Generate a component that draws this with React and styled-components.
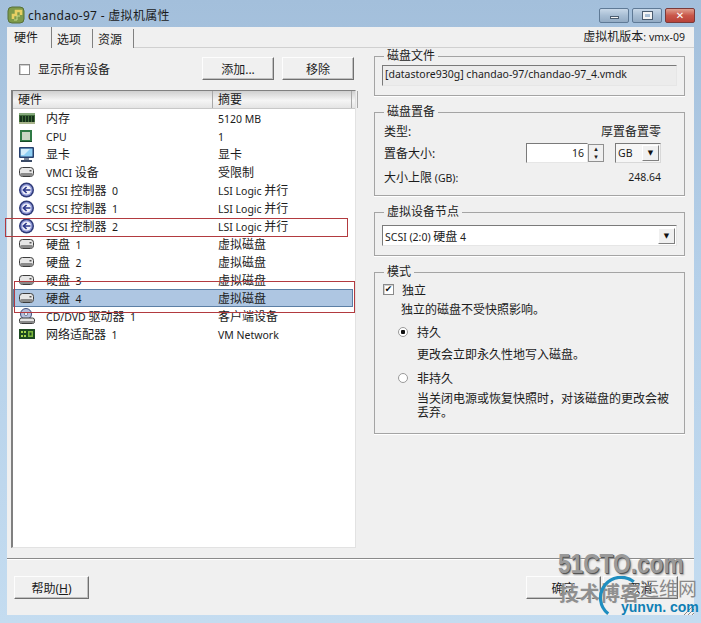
import styled, { createGlobalStyle } from 'styled-components'

const GlobalStyle = createGlobalStyle`
    html, body {
        margin: 0;
        padding: 0;
        background: #b9d3ea;
    }
    * {
        box-sizing: border-box;
    }
`

const RamIcon = () => (
    <svg width='17' height='13' viewBox='0 0 17 13'>
        <rect x='0' y='1' width='16' height='10' fill='#3f6b3a' />
        <rect x='0' y='1' width='16' height='2' fill='#86a97c' />
        <path d='M2 4v6M5 4v6M8 4v6M11 4v6M14 4v6' stroke='#16321a' strokeWidth='2' />
        <rect x='0' y='10' width='16' height='2' fill='#a9b48c' />
    </svg>
)

const CpuIcon = () => (
    <svg width='16' height='16' viewBox='0 0 16 16'>
        <rect x='1' y='2' width='12' height='12' fill='#2f7a45' />
        <rect x='3' y='4' width='8' height='8' fill='#c9d6c4' />
        <rect x='1' y='13' width='12' height='1' fill='#164a28' />
    </svg>
)

const MonitorIcon = () => (
    <svg width='17' height='17' viewBox='0 0 17 17'>
        <rect x='0' y='1' width='15' height='11' rx='1' fill='#27406e' />
        <rect x='1.5' y='2.5' width='12' height='8' fill='#8fd0f4' />
        <path d='M2 3h9l-6 6H2z' fill='#d4eefb' />
        <rect x='5' y='12' width='5' height='2' fill='#7a8799' />
        <rect x='2' y='14' width='11' height='2' fill='#3a4a66' />
    </svg>
)

const DiskIcon = () => (
    <svg width='16' height='12' viewBox='0 0 16 12'>
        <rect x='0.5' y='1.5' width='14' height='9' rx='3' fill='#e6e6e6' stroke='#3c3c3c' />
        <rect x='1' y='7' width='13' height='3' rx='1.5' fill='#8a8a8a' />
        <rect x='10.5' y='4' width='2' height='1.5' fill='#555' />
    </svg>
)

const ScsiIcon = () => (
    <svg width='16' height='16' viewBox='0 0 16 16'>
        <circle cx='7.5' cy='8' r='7.5' fill='#2e3a78' />
        <circle cx='7.5' cy='8' r='6' fill='#8f98d6' />
        <circle cx='7.5' cy='8' r='4.6' fill='#f2f3fb' />
        <path d='M11.5 8H5M7.6 5L4.4 8l3.2 3' fill='none' stroke='#2e3a8c' strokeWidth='1.7' />
    </svg>
)

const CdIcon = () => (
    <svg width='17' height='17' viewBox='0 0 17 17'>
        <circle cx='7' cy='6' r='5.5' fill='#b6bfdc' stroke='#3f4c78' />
        <circle cx='7' cy='6' r='1.6' fill='#fff' stroke='#52617a' strokeWidth='0.7' />
        <rect x='0.5' y='10' width='15' height='5.5' rx='2' fill='#e4e4e4' stroke='#3c3c3c' />
        <rect x='1' y='13' width='14' height='2' fill='#8a8a8a' />
    </svg>
)

const NicIcon = () => (
    <svg width='17' height='12' viewBox='0 0 17 12'>
        <rect x='0' y='1' width='16' height='10' fill='#1d4a22' />
        <path d='M2 3h2v2H2zM5 3h2v2H5zM2 7h2v2H2zM5 7h2v2H5z' fill='#a6d64e' />
        <rect x='9' y='3' width='5' height='6' fill='#7cb83c' />
        <rect x='10.5' y='4.5' width='2' height='3' fill='#1d4a22' />
    </svg>
)

const AppIcon = () => (
    <svg width='18' height='18' viewBox='0 0 18 18'>
        <rect x='1' y='1' width='16' height='16' rx='4' fill='#7f9a4a' stroke='#56703a' />
        <path d='M6 13V9h3V5h5v4' fill='none' stroke='#e8cf63' strokeWidth='2.6' />
        <path d='M7 14h3v-4h3' fill='none' stroke='#c7d98a' strokeWidth='1' />
    </svg>
)

// Han glyphs sit a little larger than the latin text, as in the Windows UI font
const Mixed = ({ children }) =>
    children
        .split(/([\u3000-\u303f\u4e00-\u9fff\uff00-\uffef]+)/)
        .map((part, i) => (i % 2 ? <Han key={i}>{part}</Han> : part))

const devices = [
    { icon: <RamIcon />, name: '内存', summary: '5120 MB' },
    { icon: <CpuIcon />, name: 'CPU', summary: '1' },
    { icon: <MonitorIcon />, name: '显卡', summary: '显卡' },
    { icon: <DiskIcon />, name: 'VMCI 设备', summary: '受限制' },
    { icon: <ScsiIcon />, name: 'SCSI 控制器  0', summary: 'LSI Logic 并行' },
    { icon: <ScsiIcon />, name: 'SCSI 控制器  1', summary: 'LSI Logic 并行' },
    { icon: <ScsiIcon />, name: 'SCSI 控制器  2', summary: 'LSI Logic 并行' },
    { icon: <DiskIcon />, name: '硬盘  1', summary: '虚拟磁盘' },
    { icon: <DiskIcon />, name: '硬盘  2', summary: '虚拟磁盘' },
    { icon: <DiskIcon />, name: '硬盘  3', summary: '虚拟磁盘' },
    { icon: <DiskIcon />, name: '硬盘  4', summary: '虚拟磁盘', selected: true },
    { icon: <CdIcon />, name: 'CD/DVD 驱动器  1', summary: '客户端设备' },
    { icon: <NicIcon />, name: '网络适配器  1', summary: 'VM Network' },
]

const App = () => (
    <Window>
        <GlobalStyle />
        <TitleBar>
            <TitleLeft>
                <AppIcon />
                <TitleText>chandao-97 - 虚拟机属性</TitleText>
            </TitleLeft>
            <WindowButtons>
                <WindowButton>
                    <MinGlyph />
                </WindowButton>
                <WindowButton>
                    <MaxGlyph />
                </WindowButton>
                <WindowButton $close>
                    <CloseGlyph>✕</CloseGlyph>
                </WindowButton>
            </WindowButtons>
        </TitleBar>
        <Client>
            <TabRow>
                <Tabs>
                    <Tab $active>硬件</Tab>
                    <Tab>选项</Tab>
                    <Tab>资源</Tab>
                </Tabs>
                <VersionText>
                    <Mixed>虚拟机版本: vmx-09</Mixed>
                </VersionText>
            </TabRow>
            <Body>
                <LeftColumn>
                    <Toolbar>
                        <CheckLabel>
                            <CheckBox />
                            显示所有设备
                        </CheckLabel>
                        <ToolButtons>
                            <Button>添加...</Button>
                            <Button>移除</Button>
                        </ToolButtons>
                    </Toolbar>
                    <DeviceTable>
                        <HeaderRow>
                            <HeaderCell>硬件</HeaderCell>
                            <HeaderCell>摘要</HeaderCell>
                            <HeaderCell />
                        </HeaderRow>
                        {devices.map(device => (
                            <Row key={device.name} $selected={device.selected}>
                                <IconCell>{device.icon}</IconCell>
                                <span>
                                    <Mixed>{device.name}</Mixed>
                                </span>
                                <span>
                                    <Mixed>{device.summary}</Mixed>
                                </span>
                            </Row>
                        ))}
                    </DeviceTable>
                </LeftColumn>
                <RightColumn>
                    <Group>
                        <GroupTitle>磁盘文件</GroupTitle>
                        <ReadOnlyField>[datastore930g] chandao-97/chandao-97_4.vmdk</ReadOnlyField>
                    </Group>
                    <Group>
                        <GroupTitle>磁盘置备</GroupTitle>
                        <FormRow>
                            <Han>类型:</Han>
                            <Han>厚置备置零</Han>
                        </FormRow>
                        <SizeRow>
                            <Han>置备大小:</Han>
                            <SizeControls>
                                <SpinInput>16</SpinInput>
                                <Spinner>
                                    <SpinPart>▴</SpinPart>
                                    <SpinPart>▾</SpinPart>
                                </Spinner>
                                <UnitSelect>
                                    GB
                                    <ArrowButton>▼</ArrowButton>
                                </UnitSelect>
                            </SizeControls>
                        </SizeRow>
                        <FormRow>
                            <span>
                                <Mixed>大小上限 (GB):</Mixed>
                            </span>
                            <span>248.64</span>
                        </FormRow>
                    </Group>
                    <Group>
                        <GroupTitle>虚拟设备节点</GroupTitle>
                        <NodeSelect>
                            <span>
                                <Mixed>SCSI (2:0) 硬盘 4</Mixed>
                            </span>
                            <ArrowButton>▼</ArrowButton>
                        </NodeSelect>
                    </Group>
                    <ModeGroup>
                        <GroupTitle>模式</GroupTitle>
                        <IndependentRow>
                            <CheckBox $checked>✔</CheckBox>
                            独立
                        </IndependentRow>
                        <ModeNote>独立的磁盘不受快照影响。</ModeNote>
                        <RadioRow>
                            <Radio $checked />
                            持久
                        </RadioRow>
                        <RadioNote $top={7}>更改会立即永久性地写入磁盘。</RadioNote>
                        <RadioRow>
                            <Radio />
                            非持久
                        </RadioRow>
                        <RadioNote $top={5}>当关闭电源或恢复快照时，对该磁盘的更改会被丢弃。</RadioNote>
                    </ModeGroup>
                </RightColumn>
            </Body>
            <Footer>
                <Button $wide>
                    帮助(<u>H</u>)
                </Button>
                <FooterRight>
                    <Button $wide>确定</Button>
                    <Button $wide>取消</Button>
                </FooterRight>
            </Footer>
        </Client>
        <Highlight $left={5} $top={218} $width={343} $height={19} />
        <Highlight $left={14} $top={281} $width={341} $height={32} />
        <ResizeGrip viewBox='0 0 10 10'>
            <path d='M0 10L10 0M4 10l6-6M8 10l2-2' stroke='#8c8c8c' strokeWidth='1' />
        </ResizeGrip>
        <Watermark>
            <WatermarkBrand>51CTO.com</WatermarkBrand>
            <WatermarkBlog>技术博客</WatermarkBlog>
            <WatermarkSite>运维网</WatermarkSite>
            <WatermarkArc viewBox='0 0 50 50'>
                <path d='M46 6A24 24 0 0 0 14 46' fill='none' stroke='#1f8ec0' strokeWidth='4' />
            </WatermarkArc>
            <WatermarkDomain>yunvn. com</WatermarkDomain>
        </Watermark>
    </Window>
)

const Window = styled.div`
    position: relative;
    width: 701px;
    height: 623px;
    overflow: hidden;
    display: flex;
    flex-direction: column;
    padding: 0 7px 8px;
    background: linear-gradient(180deg, #a3bfdb 0%, #b5d0e9 45%, #c4dcf0 100%);
    color: #1c1c1c;
    font-family: 'Noto Sans', 'Noto Sans CJK SC', sans-serif;
    font-size: 10.5px;
`

const Han = styled.span`
    font-size: 12px;
`

const TitleBar = styled.div`
    height: 27px;
    flex: none;
    display: flex;
    align-items: flex-start;
    justify-content: space-between;
`

const TitleLeft = styled.div`
    display: flex;
    align-items: center;
    gap: 3px;
    padding-top: 6px;
`

const TitleText = styled.span`
    font-size: 12px;
    line-height: 17px;
    letter-spacing: 0.3px;
    color: #1a1a1a;
`

const WindowButtons = styled.div`
    display: flex;
    gap: 3px;
    padding-top: 8px;
    margin-right: -1px;
`

const WindowButton = styled.div`
    width: 30px;
    height: 15px;
    display: flex;
    align-items: center;
    justify-content: center;
    border: 1px solid ${props => (props.$close ? '#7a3a3a' : '#5f7a96')};
    border-radius: 2px;
    background: ${props =>
        props.$close
            ? 'linear-gradient(180deg, #e0a090 0%, #c9574a 50%, #b8423a 100%)'
            : 'linear-gradient(180deg, #c8d8e8 0%, #a8bed4 50%, #93abc4 100%)'};
`

const MinGlyph = styled.div`
    width: 9px;
    height: 3px;
    margin-top: 4px;
    background: #f4f4f4;
    border: 1px solid #4b5d70;
`

const MaxGlyph = styled.div`
    width: 9px;
    height: 7px;
    background: transparent;
    border: 2px solid #f4f4f4;
    outline: 1px solid #4b5d70;
`

const CloseGlyph = styled.span`
    color: #fff;
    font-family: 'DejaVu Sans', sans-serif;
    font-size: 10px;
    font-weight: bold;
    line-height: 13px;
`

const Client = styled.div`
    flex: 1;
    min-height: 0;
    display: flex;
    flex-direction: column;
    background: #f0f0f0;
`

const TabRow = styled.div`
    height: 21px;
    flex: none;
    display: flex;
    justify-content: space-between;
    border-bottom: 1px solid #d0d0d0;
`

const Tabs = styled.div`
    display: flex;
`

const Tab = styled.div`
    width: ${props => (props.$active ? '45px' : '41px')};
    height: ${props => (props.$active ? '21px' : '19px')};
    padding: ${props => (props.$active ? '2px 0 0 7px' : '2px 0 0 5px')};
    margin-top: ${props => (props.$active ? '0' : '2px')};
    font-size: 12px;
    line-height: 17px;
    border-right: 1px solid #808080;
    background: #f0f0f0;
`

const VersionText = styled.div`
    padding: 1px 9px 0 0;
    line-height: 18px;
`

const Body = styled.div`
    height: 510px;
    flex: none;
    display: grid;
    grid-template-columns: 345px 311px;
    column-gap: 18px;
    padding-left: 4px;
`

const LeftColumn = styled.div`
    display: flex;
    flex-direction: column;
    gap: 10px;
    padding: 9px 0 10px;
`

const Toolbar = styled.div`
    height: 23px;
    flex: none;
    display: flex;
    align-items: center;
    justify-content: space-between;
    padding-left: 8px;
`

const CheckLabel = styled.label`
    display: flex;
    align-items: center;
    gap: 8px;
    font-size: 12px;
    padding-top: 1px;
`

const CheckBox = styled.span`
    width: 11px;
    height: 11px;
    flex: none;
    display: flex;
    align-items: center;
    justify-content: center;
    background: #fff;
    border: 1px solid #8a8a8a;
    box-shadow: inset 1px 1px 0 #d0d0d0;
    font-family: 'DejaVu Sans', sans-serif;
    font-size: 9px;
    line-height: 9px;
    color: #111;
`

const ToolButtons = styled.div`
    display: flex;
    gap: 8px;
    margin-right: 2px;
`

const Button = styled.button`
    width: ${props => (props.$wide ? '75px' : '72px')};
    height: 23px;
    padding: 0;
    font-family: inherit;
    font-size: 12px;
    color: #1c1c1c;
    background: #f0f0f0;
    border: 1px solid;
    border-color: #fdfdfd #707070 #707070 #fdfdfd;
    box-shadow: inset -1px -1px 0 #c0c0c0;
`

const DeviceTable = styled.div`
    flex: 1;
    min-height: 0;
    background: #fff;
    border: 1px solid;
    border-color: #808080 #e2e2e2 #e2e2e2 #808080;
    border-left-width: 2px;
`

const HeaderRow = styled.div`
    height: 18px;
    display: grid;
    grid-template-columns: 200px 139px 1fr;
    background: linear-gradient(180deg, #cfcfcf 0%, #f5f5f5 55%, #e4e4e4 100%);
    border-bottom: 1px solid #c8c8c8;
`

const HeaderCell = styled.div`
    padding-left: 5px;
    font-size: 12px;
    line-height: 17px;
    border-right: 1px solid #a8a8a8;
`

const Row = styled.div`
    height: 18px;
    display: grid;
    grid-template-columns: 33px 167px 1fr;
    align-items: center;
    margin-right: 2px;
    line-height: 16px;
    white-space: pre;
    background: ${props => (props.$selected ? '#aec6e2' : 'transparent')};
    outline: ${props => (props.$selected ? '1px solid #5c7fa5' : 'none')};
    outline-offset: -1px;

    & > span {
        padding-top: 1px;
    }

    & > span:last-child {
        padding-left: 5px;
    }
`

const IconCell = styled.div`
    display: flex;
    align-items: center;
    padding-left: 6px;
`

const RightColumn = styled.div`
    display: flex;
    flex-direction: column;
    gap: 8px;
`

const Group = styled.fieldset`
    margin: 0;
    min-width: 0;
    padding: 0 7px 9px;
    border: 1px solid #a4a4a4;
    box-shadow: 0 1px 0 #fff;
`

const ModeGroup = styled(Group)`
    height: 170px;
    padding: 0 7px;
`

const GroupTitle = styled.legend`
    margin-left: 2px;
    padding: 0 3px;
    font-size: 12px;
    line-height: 16px;
`

const ReadOnlyField = styled.div`
    height: 21px;
    margin-top: 1px;
    padding-left: 2px;
    line-height: 17px;
    background: #ececec;
    border: 1px solid;
    border-color: #7a7a7a #e6e6e6 #e6e6e6 #7a7a7a;
`

const FormRow = styled.div`
    display: flex;
    align-items: center;
    justify-content: space-between;
    height: 18px;
    margin-top: 2px;
    padding: 0 16px 0 2px;
`

const SizeRow = styled(FormRow)`
    height: 22px;
    margin: 2px 0 4px;
`

const SizeControls = styled.div`
    display: flex;
    align-items: center;
`

const SpinInput = styled.div`
    width: 62px;
    height: 20px;
    padding-right: 3px;
    text-align: right;
    line-height: 18px;
    background: #fff;
    border: 1px solid;
    border-color: #7a7a7a #e6e6e6 #e6e6e6 #7a7a7a;
`

const Spinner = styled.div`
    width: 16px;
    height: 18px;
    margin-right: 11px;
    display: flex;
    flex-direction: column;
    border: 1px solid #909090;
    background: #f0f0f0;
`

const SpinPart = styled.span`
    flex: 1;
    font-family: 'DejaVu Sans', sans-serif;
    font-size: 7px;
    line-height: 8px;
    text-align: center;
`

const UnitSelect = styled.div`
    width: 46px;
    height: 20px;
    display: flex;
    align-items: center;
    justify-content: space-between;
    padding: 0 1px 0 2px;
    background: #f6f6f6;
    border: 1px solid;
    border-color: #7a7a7a #d8d8d8 #d8d8d8 #7a7a7a;
`

const ArrowButton = styled.span`
    width: 17px;
    height: 16px;
    font-family: 'DejaVu Sans', sans-serif;
    font-size: 7px;
    line-height: 15px;
    text-align: center;
    color: #111;
    background: #f0f0f0;
    border: 1px solid;
    border-color: #fff #808080 #808080 #fff;
`

const NodeSelect = styled.div`
    height: 21px;
    margin-top: 5px;
    display: flex;
    align-items: center;
    justify-content: space-between;
    padding: 0 1px 0 2px;
    background: #fff;
    border: 1px solid;
    border-color: #7a7a7a #e6e6e6 #e6e6e6 #7a7a7a;
`

const IndependentRow = styled.div`
    display: flex;
    align-items: center;
    gap: 8px;
    height: 17px;
    margin: 1px 0 0 1px;
    font-size: 12px;
`

const ModeNote = styled.div`
    margin: 3px 0 0 19px;
    font-size: 12px;
    line-height: 18px;
`

const RadioRow = styled.div`
    display: flex;
    align-items: center;
    gap: 9px;
    height: 18px;
    margin: 4px 0 0 16px;
    font-size: 12px;
`

const Radio = styled.span`
    width: 10px;
    height: 10px;
    flex: none;
    border-radius: 50%;
    border: 1px solid #9a9a9a;
    background: ${props =>
        props.$checked ? 'radial-gradient(circle, #111 0 2px, #fff 2.5px)' : '#fff'};
`

const RadioNote = styled.div`
    margin: ${props => props.$top}px 8px 7px 35px;
    font-size: 12px;
    line-height: 14px;
`

const Footer = styled.div`
    flex: 1;
    display: flex;
    justify-content: space-between;
    align-items: flex-start;
    padding: 17px 16px 0 7px;
    border-top: 1px solid #8a8a8a;
    box-shadow: inset 0 1px 0 #fff;
`

const FooterRight = styled.div`
    display: flex;
    gap: 2px;
`

const Highlight = styled.div`
    position: absolute;
    left: ${props => props.$left}px;
    top: ${props => props.$top}px;
    width: ${props => props.$width}px;
    height: ${props => props.$height}px;
    border: 1px solid #b23a3f;
    pointer-events: none;
`

const ResizeGrip = styled.svg`
    position: absolute;
    right: 7px;
    bottom: 8px;
    width: 10px;
    height: 10px;
`

const Watermark = styled.div`
    position: absolute;
    left: 550px;
    top: 548px;
    width: 151px;
    height: 75px;
    pointer-events: none;
`

const WatermarkBrand = styled.div`
    position: absolute;
    left: 8px;
    top: 1px;
    font-family: 'Liberation Sans', sans-serif;
    font-size: 28px;
    font-weight: bold;
    line-height: 30px;
    color: #9a9a9a;
    transform: scaleX(0.81);
    transform-origin: left center;
    text-shadow: 1px 1px 0 #555, 2px 2px 2px #999;
`

const WatermarkBlog = styled.div`
    position: absolute;
    left: 9px;
    top: 34px;
    font-size: 20px;
    font-weight: bold;
    line-height: 24px;
    color: #8f8f8f;
    letter-spacing: 0.5px;
    text-shadow: 1px 1px 0 #e8e8e8;
`

const WatermarkSite = styled.div`
    position: absolute;
    left: 90px;
    top: 29px;
    font-size: 19px;
    line-height: 24px;
    color: #8a8a8a;
`

const WatermarkArc = styled.svg`
    position: absolute;
    left: 47px;
    top: 28px;
    width: 40px;
    height: 42px;
`

const WatermarkDomain = styled.div`
    position: absolute;
    left: 71px;
    top: 51px;
    font-family: 'Liberation Sans', sans-serif;
    font-size: 14px;
    font-weight: bold;
    line-height: 16px;
    color: #0f7fb5;
    white-space: nowrap;
`

export default App
